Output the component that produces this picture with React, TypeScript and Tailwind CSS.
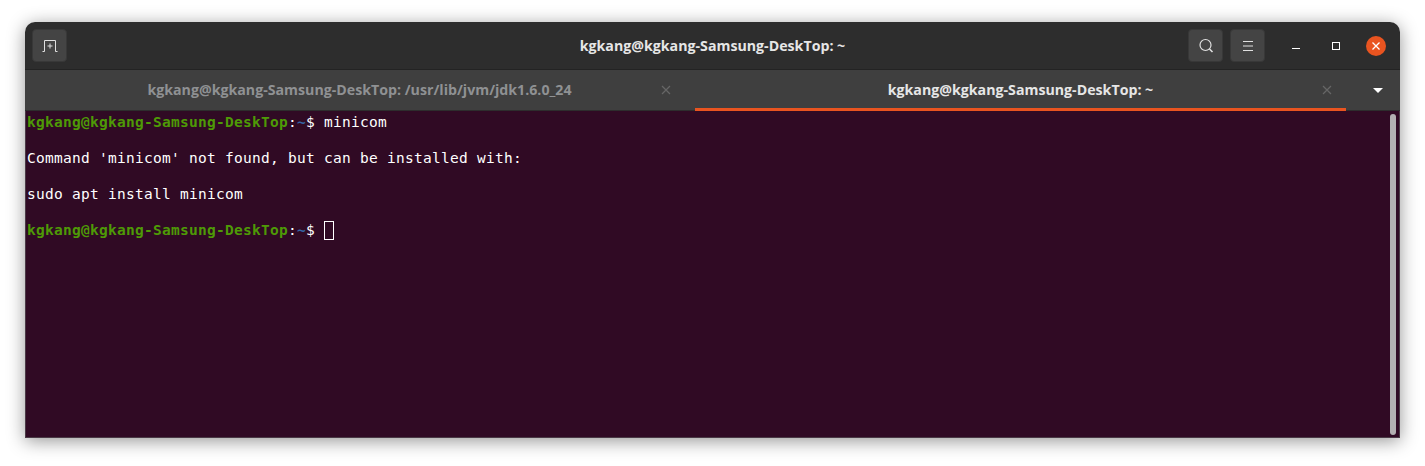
const PROMPT = 'kgkang@kgkang-Samsung-DeskTop';

function Prompt() {
    return (
        <>
            <span className="font-bold text-[#4e9a06]">{PROMPT}</span>
            <span className="text-white">:</span>
            <span className="font-bold text-[#3465a4]">~</span>
            <span className="text-white">$ </span>
        </>
    );
}

function HeaderButton({ children }: { children: React.ReactNode }) {
    return (
        <div className="flex h-[33px] w-[35px] items-center justify-center rounded-[4px] border border-[#383838] bg-[#444444] text-[#e0e0e0]">
            {children}
        </div>
    );
}

function TabClose({ tone }: { tone: string }) {
    return (
        <svg width="10" height="10" viewBox="0 0 10 10" className={tone}>
            <path d="M1 1l8 8M9 1l-8 8" stroke="currentColor" strokeWidth="1.2" fill="none" />
        </svg>
    );
}

export default function App() {
    return (
        <div className="h-[466px] w-[1425px] overflow-hidden bg-white pl-[25px] pt-[22px] font-['Open_Sans','Noto_Sans',sans-serif]">
            <div className="flex h-[416px] w-[1375px] flex-col overflow-hidden rounded-t-[10px] shadow-[0_3px_18px_rgba(0,0,0,0.42)]">

                {/* Title bar */}
                <div className="relative flex h-[48px] shrink-0 items-center justify-between border-b border-[#232323] bg-[#2d2d2d] pl-[7px] pr-[14px]">
                    <HeaderButton>
                        <svg width="16" height="14" viewBox="0 0 16 14" fill="none" stroke="currentColor" strokeWidth="1">
                            <path d="M0.5 12.5H2.5V1.5H13.5V12.5H15.5" />
                            <path d="M8 4.5V9.5M5.5 7H10.5" />
                        </svg>
                    </HeaderButton>
                    <div className="absolute inset-x-0 text-center text-[14.2px] font-bold text-[#e6e6e6]">kgkang@kgkang-Samsung-DeskTop: ~</div>
                    <div className="relative flex items-center">
                        <div className="flex gap-[7px]">
                            <HeaderButton>
                                <svg width="16" height="16" viewBox="0 0 16 16" fill="none" stroke="currentColor">
                                    <circle cx="7.5" cy="7" r="5.5" strokeWidth="1.2" />
                                    <path d="M11.5 11l3 3" strokeWidth="1.6" />
                                </svg>
                            </HeaderButton>
                            <HeaderButton>
                                <svg width="12" height="12" viewBox="0 0 12 12" fill="none" stroke="currentColor" strokeWidth="1">
                                    <path d="M1 1.5H11M1 6H11M1 10.5H11" />
                                </svg>
                            </HeaderButton>
                        </div>
                        <div className="ml-[27px] flex w-[8px] justify-center pt-[6px]">
                            <div className="h-[1px] w-[8px] shrink-0 bg-white" />
                        </div>
                        <div className="ml-[32px] h-[8px] w-[8px] border border-white" />
                        <div className="ml-[26px] flex h-[20px] w-[20px] items-center justify-center rounded-full bg-[#e95420]">
                            <svg width="8" height="8" viewBox="0 0 8 8">
                                <path d="M0.5 0.5l7 7M7.5 0.5l-7 7" stroke="white" strokeWidth="1.3" fill="none" />
                            </svg>
                        </div>
                    </div>
                </div>

                {/* Tabs */}
                <div className="flex h-[41px] shrink-0 items-stretch border-b border-[#2d2d2d] bg-[#3f3f3f] text-[14.2px] font-bold">
                    <div className="relative flex w-[670px] items-center justify-center pr-[1px] text-[#8f9193]">
                        kgkang@kgkang-Samsung-DeskTop: /usr/lib/jvm/jdk1.6.0_24
                        <div className="absolute right-[24px] top-[15px] flex">
                            <TabClose tone="text-[#666666]" />
                        </div>
                    </div>
                    <div className="relative -mb-[1px] flex w-[651px] items-center justify-center border-b-[3px] border-[#e95420] pt-[2px] text-[#e6e6e6]">
                        kgkang@kgkang-Samsung-DeskTop: ~
                        <div className="absolute right-[14px] top-[15px] flex">
                            <TabClose tone="text-[#666666]" />
                        </div>
                    </div>
                    <div className="flex flex-1 items-center justify-center pl-[10px]">
                        <div className="h-0 w-0 border-x-[5px] border-t-[5px] border-x-transparent border-t-white" />
                    </div>
                </div>

                {/* Terminal */}
                <div className="relative min-h-0 flex-1 border-x border-b border-[#4a3a46] bg-[#300a24] pl-[1px] pt-[2px] font-['DejaVu_Sans_Mono',monospace] text-[14.5px] leading-[18px] tracking-[0.27px] text-white whitespace-pre">
                    <div><Prompt />minicom</div>
                    <div>&nbsp;</div>
                    <div>Command 'minicom' not found, but can be installed with:</div>
                    <div>&nbsp;</div>
                    <div>sudo apt install minicom</div>
                    <div>&nbsp;</div>
                    <div className="flex items-start">
                        <span><Prompt /></span>
                        <span className="h-[19px] w-[10px] border border-white" />
                    </div>
                    <div className="absolute bottom-[2px] right-[3px] top-[3px] w-[6px] rounded-full bg-[#b3b0b2]" />
                </div>
            </div>
        </div>
    );
}
